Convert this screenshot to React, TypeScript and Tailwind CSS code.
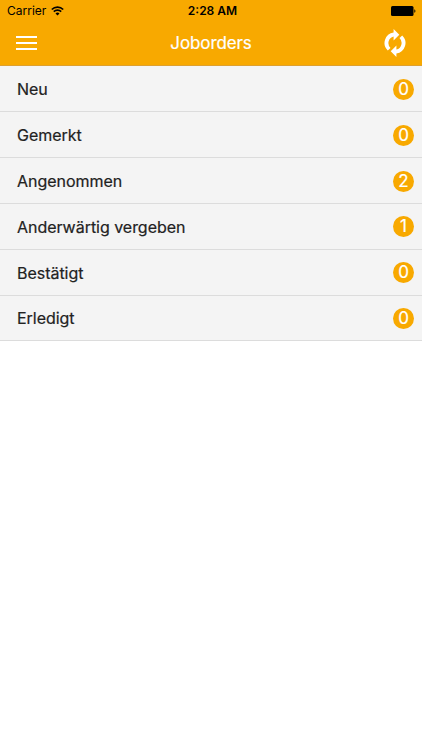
const ORDERS = [
  { label: 'Neu', count: 0 },
  { label: 'Gemerkt', count: 0 },
  { label: 'Angenommen', count: 2 },
  { label: 'Anderwärtig vergeben', count: 1 },
  { label: 'Bestätigt', count: 0 },
  { label: 'Erledigt', count: 0 },
];

export default function App() {
  return (
    <div className="min-h-screen bg-white font-['Inter',sans-serif] text-[#222]">
      <header className="h-[66px] bg-[#f8a900] border-b border-[#dda030]">
        {/* Status bar */}
        <div className="grid grid-cols-3 items-center h-[22px] pl-[7px] pr-[6px] text-[12px] text-black">
          <div className="flex items-center gap-[5px]">
            <span>Carrier</span>
            <svg width="13" height="10" viewBox="0 0 13 10" fill="none" stroke="#000" strokeWidth="1.7">
              <path d="M0.8 3.5a8 8 0 0 1 11.4 0M2.8 5.7a5.2 5.2 0 0 1 7.4 0" />
              <path d="M6.5 9.5L4.5 7.5a2.8 2.8 0 0 1 4 0z" fill="#000" stroke="none" />
            </svg>
          </div>
          <span className="pl-[2px] text-center font-semibold">2:28 AM</span>
          <svg className="justify-self-end" width="25" height="10" viewBox="0 0 25 10">
            <rect width="22.5" height="10" rx="1.5" />
            <path d="M23.3 3.2c1.5.5 1.5 3.1 0 3.6z" />
          </svg>
        </div>
        {/* Title bar */}
        <div className="grid grid-cols-[1fr_auto_1fr] items-center h-[43px] px-4 text-white">
          <button className="flex flex-col gap-1 w-[21px] -mt-px" aria-label="Menu">
            <span className="h-[2px] bg-white" />
            <span className="h-[2px] bg-white" />
            <span className="h-[2px] bg-white" />
          </button>
          <h1 className="text-[17px] tracking-[-0.1px] [-webkit-text-stroke:0.2px_#fff]">Joborders</h1>
          <button className="justify-self-end -mt-px" aria-label="Refresh">
            <svg width="22" height="28" viewBox="0 0 22 28" fill="#fff">
              <path d="M9.6 0v3.6A10.5 10.5 0 0 0 3.8 21.600l2.700-2.700A6.800 6.800 0 0 1 9.600 7.400v4l5.700-5.700z" />
              <path d="M12.400 28v-3.600A10.500 10.500 0 0 0 18.200 6.400l-2.700 2.700A6.800 6.800 0 0 1 12.400 20.600v-4l-5.700 5.700z" />
            </svg>
          </button>
        </div>
      </header>
      <ul className="pt-[0.6px] bg-[#f4f4f4]">
        {ORDERS.map((o) => (
          <li key={o.label} className="flex items-center justify-between h-[45.8px] pt-px pl-[17px] pr-[8px] border-b border-[#dcdcdc]">
            <span className="text-[16px] tracking-[-0.03px] [-webkit-text-stroke:0.2px_#222]">{o.label}</span>
            <span className="flex items-center justify-center size-[21px] rounded-full bg-[#f8a900] text-white text-[17px] leading-none [-webkit-text-stroke:0.2px_#fff]">{o.count}</span>
          </li>
        ))}
      </ul>
    </div>
  );
}
